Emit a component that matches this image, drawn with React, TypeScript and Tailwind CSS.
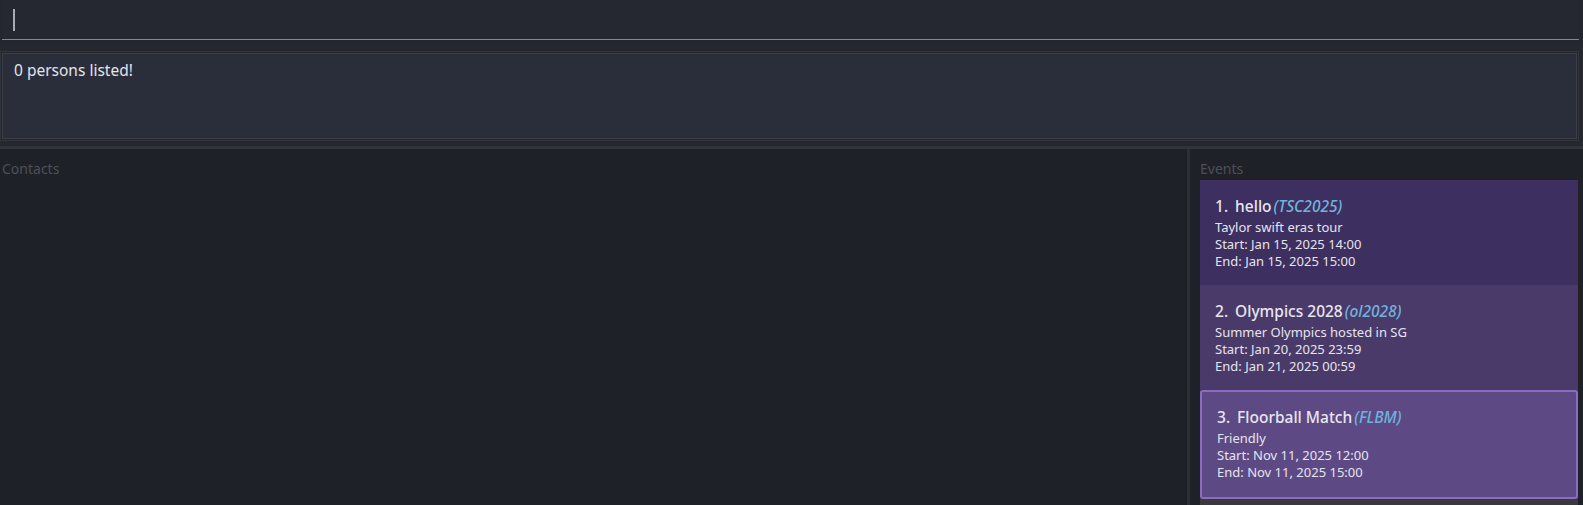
import React from "react";

type EventItem = {
  name: string;
  code: string;
  desc: string;
  start: string;
  end: string;
};

const events: EventItem[] = [
  { name: "hello", code: "TSC2025", desc: "Taylor swift eras tour", start: "Jan 15, 2025 14:00", end: "Jan 15, 2025 15:00" },
  { name: "Olympics 2028", code: "ol2028", desc: "Summer Olympics hosted in SG", start: "Jan 20, 2025 23:59", end: "Jan 21, 2025 00:59" },
  { name: "Floorball Match", code: "FLBM", desc: "Friendly", start: "Nov 11, 2025 12:00", end: "Nov 11, 2025 15:00" },
];

const cardBg = ["bg-[#3d2f5f]", "bg-[#4a3a6a]"];

function EventCard({ ev, index, selected }: { ev: EventItem; index: number; selected?: boolean }) {
  return (
    <div
      className={
        selected
          ? "h-[109px] rounded-[3px] border-2 border-[#8b6cc4] bg-[#5d4a85] pl-[15px] pt-[15px]"
          : `h-[105px] ${cardBg[index % 2]} pl-[15px] pt-[16px]`
      }
    >
      <div className="flex items-baseline text-[15.5px] leading-[20px] text-[#e8e6ef]">
        <span className="font-medium">{index + 1}.</span>
        <span className="ml-[7px] font-medium">{ev.name}</span>
        <span className="ml-[2px] font-medium italic text-[#6fb3dd]">({ev.code})</span>
      </div>
      <div className="mt-[3px] text-[13px] leading-[17px] text-[#e6e4ee]">
        <div>{ev.desc}</div>
        <div>Start: {ev.start}</div>
        <div>End: {ev.end}</div>
      </div>
    </div>
  );
}

export default function App() {
  return (
    <div
      className="flex h-[505px] w-[1583px] flex-col overflow-hidden bg-[#1f2129]"
      style={{ fontFamily: '"Noto Sans", "Open Sans", sans-serif' }}
    >
      {/* command box */}
      <div className="h-[44px] bg-[#23262e] pr-[4px]">
        <div className="ml-[2px] flex h-[40px] items-center border-b border-[#5f8fbf] bg-[#252830] pl-[11px]">
          <div className="h-[22px] w-[2px] bg-[#a9abb0]" />
        </div>
      </div>

      {/* result display */}
      <div className="h-[102px] bg-[#25272e] pt-[7px] pr-[4px] pb-[5px]">
        <div className="h-[90px] border border-[#31343c] p-[1px]">
          <div className="h-full border border-[#3a3d46] bg-[#2a2e3a] px-[11px] pt-[5px] text-[15.5px] text-[#e2e4ea]">
            0 persons listed!
          </div>
        </div>
      </div>

      <div className="h-[3px] bg-[#30333b]" />

      {/* lists */}
      <div className="flex min-h-0 flex-1">
        <div className="w-[1187px] pl-[2px] pt-[11px]">
          <div className="text-[14px] leading-[18px] text-[#4c4f57]">Contacts</div>
        </div>
        <div className="w-[3px] bg-[#2b2e35]" />
        <div className="w-[10px]" />
        <div className="flex w-[378px] flex-col pt-[11px]">
          <div className="text-[14px] leading-[18px] text-[#4c4f57]">Events</div>
          <div className="mt-[2px] flex flex-1 flex-col bg-[#3a3a3a]">
            {events.map((ev, i) => (
              <EventCard key={ev.code} ev={ev} index={i} selected={i === 2} />
            ))}
          </div>
        </div>
        <div className="flex-1" />
      </div>
    </div>
  );
}
